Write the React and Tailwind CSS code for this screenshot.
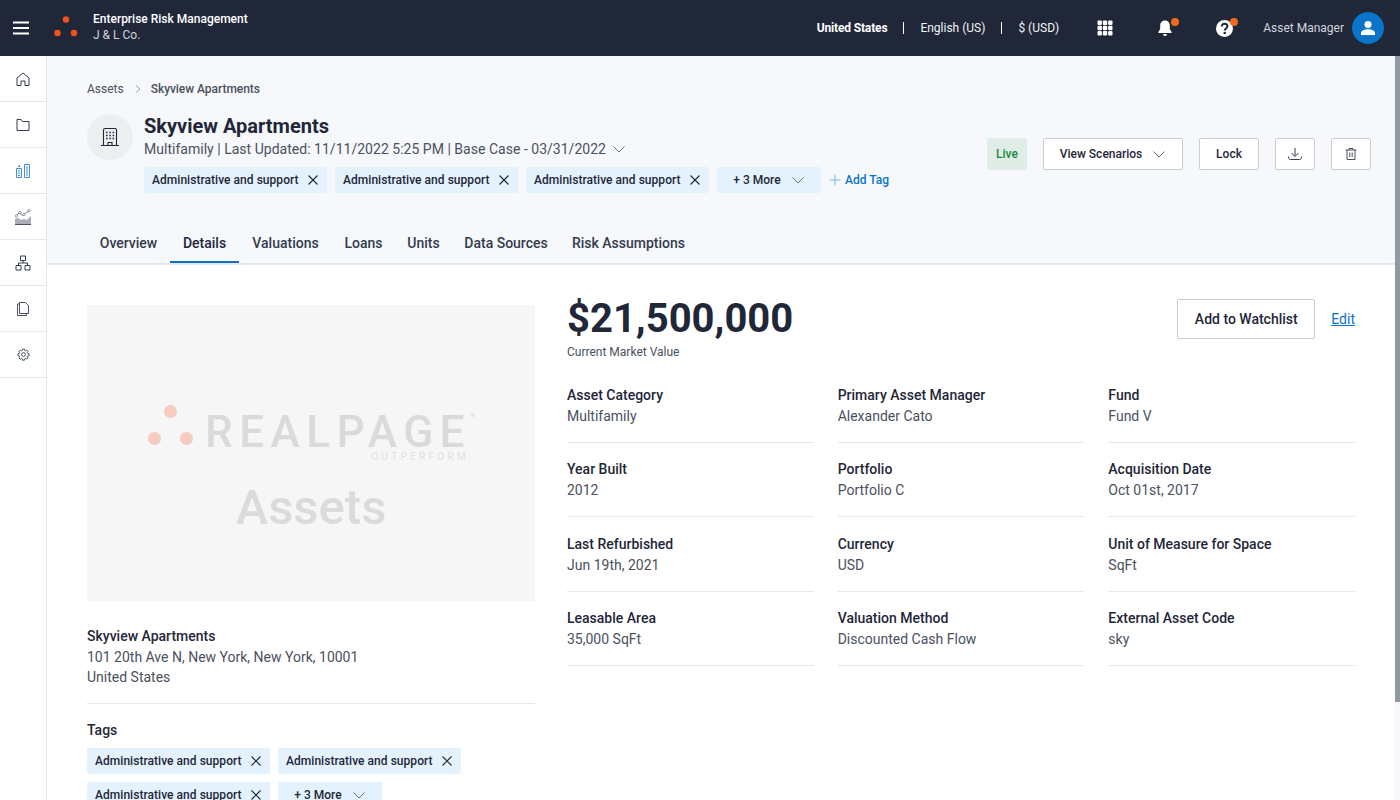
const Chevron = ({ className = 'w-3.5 h-3.5 text-gray-500' }) => (
  <svg className={className} fill="none" stroke="currentColor" viewBox="0 0 14 14" strokeWidth={1}>
    <path d="M1.5 4.5 7 10l5.5-5.5" />
  </svg>
);

const Close = () => (
  <svg className="w-3 h-3 text-[#1f2739]" fill="none" stroke="currentColor" viewBox="0 0 12 12" strokeWidth={1.1}>
    <path d="M1.5 1.5l9 9M10.5 1.5l-9 9" />
  </svg>
);

const Tag = ({ label }) => (
  <div className="flex items-center h-[26px] w-[183px] px-2 justify-between bg-[#e3f2fd] rounded-[2px] text-xs font-medium text-[#1f2739]">
    <span className="tracking-[0.04px]">{label}</span>
    <Close />
  </div>
);

const MoreTag = () => (
  <div className="flex items-center justify-center gap-[10px] h-[26px] w-[104px] bg-[#e3f2fd] rounded-[2px] text-xs font-medium text-[#1f2739]">
    <span>+ 3 More</span>
    <Chevron className="w-3.5 h-3.5 text-gray-500" />
  </div>
);

const sideIcons = [
  <svg key="home" className="w-[14px] h-[14px] text-[#333b4d]" fill="none" stroke="currentColor" viewBox="0 0 14 14" strokeWidth={1}>
    <path d="M1 6 7 1l6 5v7.500H9V9H5v4.500H1z" strokeLinejoin="round" />
  </svg>,
  <svg key="folder" className="w-[14px] h-[14px] text-[#333b4d]" fill="none" stroke="currentColor" viewBox="0 0 14 14" strokeWidth={1}>
    <path d="M1 1.500h4l1.500 2H13v9H1z" strokeLinejoin="round" />
  </svg>,
  <svg key="assets" className="w-[14px] h-[14px] text-[#3f8fdc]" fill="none" stroke="currentColor" viewBox="0 0 14 14" strokeWidth={1}>
    <path d="M.5 4.500h5v9h-5zM8.500.5h5v13h-5zM2 7h2M2 9.300h2M2 11.500h2M10 3h2M10 5h2M10 7h2M10 9h2M10 11h2M2 2.500h1.500M3.500 1v2" />
  </svg>,
  <svg key="chart" className="w-4 h-4" fill="none" viewBox="0 0 16 16">
    <path d="M0 15V10l3-1 3 2 3-1 3 1 4-4v8z" fill="#a9adb6" />
    <path d="M0 15.500h16" stroke="#4a5160" />
    <path d="M1 7l3-3 3 2.500 3-2 4-3" stroke="#6b7280" strokeWidth={0.8} />
    <circle cx="1.500" cy="7" r="1.200" fill="#fff" stroke="#6b7280" strokeWidth={0.7} />
    <circle cx="5" cy="3.500" r="1.200" fill="#fff" stroke="#6b7280" strokeWidth={0.7} />
    <circle cx="9" cy="5.500" r="1.200" fill="#fff" stroke="#6b7280" strokeWidth={0.7} />
    <circle cx="14" cy="1.800" r="1.200" fill="#fff" stroke="#6b7280" strokeWidth={0.7} />
  </svg>,
  <svg key="org" className="w-4 h-4 text-[#333b4d]" fill="none" stroke="currentColor" viewBox="0 0 16 16" strokeWidth={1}>
    <path d="M5.500 1h5v4.500h-5zM1 10.500h5V15H1zM10 10.500h5V15h-5zM8 5.500V8M3.500 10.500V8h9v2.500" />
  </svg>,
  <svg key="copy" className="w-[14px] h-[14px] text-[#4a5160]" fill="none" stroke="currentColor" viewBox="0 0 14 14" strokeWidth={1}>
    <path d="M3.500.5h6l3 3V11.500h-9zM3.500 2H1.500v11.500h9v-2" strokeLinejoin="round" />
  </svg>,
  <svg key="gear" className="w-[13px] h-[13px] text-[#4a5160]" fill="none" stroke="currentColor" viewBox="0 0 24 24" strokeWidth={1.800} strokeLinejoin="round">
    <path d="M10.300 2h3.400l.5 2.600 1.700.7 2.200-1.500 2.400 2.400-1.500 2.200.7 1.700 2.600.5v3.400l-2.600.5-.7 1.700 1.500 2.200-2.400 2.400-2.200-1.500-1.700.7-.5 2.600h-3.400l-.5-2.600-1.700-.7-2.200 1.500-2.400-2.400 1.500-2.200-.7-1.700-2.600-.5v-3.400l2.600-.5.7-1.700-1.500-2.200 2.400-2.400 2.200 1.500 1.700-.7z" />
    <circle cx="12" cy="12" r="3.500" />
  </svg>,
];

const tabs = [
  { label: 'Overview', width: 'w-[83px]' },
  { label: 'Details', width: 'w-[69px]' },
  { label: 'Valuations', width: 'w-[93px]' },
  { label: 'Loans', width: 'w-[63px]' },
  { label: 'Units', width: 'w-[57px]' },
  { label: 'Data Sources', width: 'w-[108px]' },
  { label: 'Risk Assumptions', width: 'w-[137px]' },
];

const fields = [
  ['Asset Category', 'Multifamily'],
  ['Primary Asset Manager', 'Alexander Cato'],
  ['Fund', 'Fund V'],
  ['Year Built', '2012'],
  ['Portfolio', 'Portfolio C'],
  ['Acquisition Date', 'Oct 01st, 2017'],
  ['Last Refurbished', 'Jun 19th, 2021'],
  ['Currency', 'USD'],
  ['Unit of Measure for Space', 'SqFt'],
  ['Leasable Area', '35,000 SqFt'],
  ['Valuation Method', 'Discounted Cash Flow'],
  ['External Asset Code', 'sky'],
];

export default function App() {
  return (
    <div className="h-screen flex flex-col overflow-hidden bg-white text-[#1f2739] font-['Roboto',sans-serif]">
      <header className="h-14 shrink-0 bg-[#1f2739] flex items-center text-white">
        <div className="w-[42px] flex justify-center">
          <svg className="w-4 h-[14px]" viewBox="0 0 16 14" stroke="#fff" strokeWidth={2}>
            <path d="M0 1.500h16M0 7h16M0 12.500h16" />
          </svg>
        </div>
        <svg className="w-[26px] h-6 ml-[11px] -mt-[2px]" viewBox="0 0 26 24" fill="#f4511e">
          <circle cx="13" cy="4.500" r="3.200" />
          <circle cx="4.500" cy="18" r="3.200" />
          <circle cx="21" cy="18" r="3.200" />
        </svg>
        <div className="ml-[14px] leading-4 -mt-[2px]">
          <div className="text-xs font-medium">Enterprise Risk Management</div>
          <div className="text-xs text-gray-300">J &amp; L Co.</div>
        </div>
        <div className="ml-auto flex items-center text-xs">
          <span className="font-bold tracking-[-0.15px]">United States</span>
          <span className="w-px h-3 bg-white mx-4" />
          <span className="text-gray-100">English (US)</span>
          <span className="w-px h-3 bg-white mx-4" />
          <span className="text-gray-100">$ (USD)</span>
          <svg className="w-4 h-4 ml-[38px]" viewBox="0 0 16 16" fill="#fff">
            <rect x="0.500" y="0.500" width="4.400" height="4.400" rx="1" />
            <rect x="5.800" y="0.500" width="4.400" height="4.400" rx="1" />
            <rect x="11.100" y="0.500" width="4.400" height="4.400" rx="1" />
            <rect x="0.500" y="5.800" width="4.400" height="4.400" rx="1" />
            <rect x="5.800" y="5.800" width="4.400" height="4.400" rx="1" />
            <rect x="11.100" y="5.800" width="4.400" height="4.400" rx="1" />
            <rect x="0.500" y="11.100" width="4.400" height="4.400" rx="1" />
            <rect x="5.800" y="11.100" width="4.400" height="4.400" rx="1" />
            <rect x="11.100" y="11.100" width="4.400" height="4.400" rx="1" />
          </svg>
          <div className="relative ml-[44px] w-4 h-[18px]">
            <svg className="w-4 h-[18px]" viewBox="0 0 16 18" fill="#fff">
              <path d="M8 1.500c-3 0-4.800 2.200-4.800 5v3.600L1.400 13v1h13.200v-1l-1.800-2.900V6.500c0-2.800-1.800-5-4.800-5z" />
              <path d="M6 15h4a2 2 0 0 1-4 0z" />
            </svg>
            <span className="absolute -top-[1px] left-[14px] w-2 h-2 rounded-full bg-[#f26a1b]" />
          </div>
          <div className="relative ml-[43px] w-[17px] h-[17px]">
            <svg className="w-[17px] h-[17px]" viewBox="0 0 17 17">
              <circle cx="8.500" cy="8.500" r="8.500" fill="#fff" />
              <path d="M5.800 6.500c0-1.700 1.200-2.700 2.800-2.700s2.800 1 2.800 2.500c0 2.200-2.600 2.100-2.600 4.200" fill="none" stroke="#1f2739" strokeWidth={2} />
              <circle cx="8.700" cy="13" r="1.300" fill="#1f2739" />
            </svg>
            <span className="absolute -top-[2px] left-[14px] w-2 h-2 rounded-full bg-[#f26a1b]" />
          </div>
          <span className="ml-[30px] text-gray-300">Asset Manager</span>
          <div className="ml-[8px] mr-4 w-8 h-8 rounded-full bg-[#0a74c9] flex items-center justify-center">
            <svg className="w-4 h-4" viewBox="0 0 16 16" fill="#fff">
              <circle cx="8" cy="4.500" r="3.500" />
              <path d="M1 15v-2c0-2.500 3.500-3.800 7-3.800s7 1.300 7 3.800v2z" />
            </svg>
          </div>
        </div>
      </header>

      <div className="flex-1 flex min-h-0">
        <aside className="w-[47px] shrink-0 border-r border-gray-200 bg-white">
          {sideIcons.map((icon) => (
            <div key={icon.key} className="h-[46px] flex items-center justify-center border-b border-gray-200">
              {icon}
            </div>
          ))}
        </aside>

        <main className="flex-1 min-w-0 overflow-hidden">
          <section className="h-[209px] bg-[#f6f8fb] border-b-2 border-gray-200 flex flex-col">
            <div className="pl-10 pr-6 pt-[25px] flex-1">
              <div className="flex items-center text-xs text-[#4a5160] h-4">
                <span>Assets</span>
                <svg className="w-2 h-2 mx-[10px] text-gray-400" fill="none" stroke="currentColor" viewBox="0 0 8 8">
                  <path d="M2 0.500 6 4 2 7.500" />
                </svg>
                <span className="font-medium tracking-[-0.05px] -ml-[1px]">Skyview Apartments</span>
              </div>
              <div className="flex mt-[17px]">
                <div className="w-[46px] h-[46px] rounded-full bg-[#eceef0] flex items-center justify-center shrink-0">
                  <svg className="w-5 h-5 text-[#1f2739]" fill="none" stroke="currentColor" viewBox="0 0 20 20" strokeWidth={1.100}>
                    <path d="M1 18.500h18M3.500 18.500V3c0-.8.5-1.500 1.500-1.500h10c1 0 1.500.7 1.500 1.500v15.500M8 18.500v-3h4v3" />
                    <path d="M6 5.500h1.500M9.300 5.500h1.500M12.600 5.500h1.500M6 8.500h1.500M9.300 8.500h1.500M12.600 8.500h1.500M6 11.500h1.500M9.300 11.500h1.500M12.600 11.500h1.500" strokeWidth={1.500} />
                  </svg>
                </div>
                <div className="ml-[11px]">
                  <div className="text-xl font-bold leading-6 text-[#1f2739]">Skyview Apartments</div>
                  <div className="flex items-center text-sm leading-5 text-[#4a5160] mt-[1px]">
                    <span className="tracking-[0.02px]">Multifamily | Last Updated: 11/11/2022 5:25 PM | Base Case - 03/31/2022</span>
                    <Chevron className="w-3.5 h-3.5 ml-[6px] text-gray-500" />
                  </div>
                  <div className="flex items-center gap-2 mt-2">
                    <Tag label="Administrative and support" />
                    <Tag label="Administrative and support" />
                    <Tag label="Administrative and support" />
                    <MoreTag />
                    <div className="flex items-center text-xs font-medium text-[#0a74c9]">
                      <svg className="w-3 h-3 mr-1 text-[#7db8e8]" fill="none" stroke="currentColor" viewBox="0 0 12 12">
                        <path d="M6 0.500v11M0.500 6h11" />
                      </svg>
                      Add Tag
                    </div>
                  </div>
                </div>
                <div className="ml-auto flex items-center gap-4 h-8 mt-[24px] text-xs font-medium">
                  <div className="w-10 h-8 bg-[#e0ede6] rounded-[2px] text-[#1a8a3f] flex items-center justify-center">Live</div>
                  <button className="w-[140px] h-8 bg-white border border-[#c9ccd2] rounded-[2px] flex items-center justify-center gap-[10px]">
                    View Scenarios
                    <Chevron className="w-3.5 h-3.5 text-gray-500" />
                  </button>
                  <button className="w-[60px] h-8 bg-white border border-[#c9ccd2] rounded-[2px]">Lock</button>
                  <button className="w-10 h-8 bg-white border border-[#c9ccd2] rounded-[2px] flex items-center justify-center">
                    <svg className="w-4 h-4 text-[#333b4d]" fill="none" stroke="currentColor" viewBox="0 0 16 16">
                      <path d="M8 2v8M4.500 7 8 10.500 11.500 7M1.500 10.500c0 2 .5 3 2 3h9c1.500 0 2-1 2-3" />
                    </svg>
                  </button>
                  <button className="w-10 h-8 bg-white border border-[#c9ccd2] rounded-[2px] flex items-center justify-center">
                    <svg className="w-[14px] h-[14px] text-[#4a5160]" fill="none" stroke="currentColor" viewBox="0 0 14 14">
                      <path d="M1.500 3h11M5 3V1.500h4V3M3 3v9.500h8V3M5.800 5.500v4.500M8.200 5.500v4.500" />
                    </svg>
                  </button>
                </div>
              </div>
            </div>
            <nav className="pl-10 flex text-sm font-medium h-[38px] text-[#333b4d]">
              {tabs.map((tab) => (
                <div
                  key={tab.label}
                  className={`${tab.width} flex items-center justify-center h-[38px] border-b-2 ${tab.label === 'Details' ? 'border-[#0a74c9] text-[#1f2739]' : 'border-transparent'}`}
                >
                  {tab.label}
                </div>
              ))}
            </nav>
          </section>

          <section className="flex pl-10 pr-10 pt-10">
            <div className="w-[448px] shrink-0">
              <div className="h-[297px] bg-[#f6f6f6] flex flex-col items-center pt-[100px]">
                <div className="flex self-start ml-[61px]">
                  <svg className="w-[45px] h-10 opacity-25" viewBox="0 0 45 40" fill="#f4511e">
                    <circle cx="22.500" cy="6.500" r="6.500" />
                    <circle cx="6.500" cy="33.500" r="6.500" />
                    <circle cx="38.500" cy="33.500" r="6.500" />
                  </svg>
                  <div className="ml-[12px] mt-[7px] flex flex-col relative">
                    <span className="text-[44px] leading-[40px] font-medium tracking-[6.500px] text-[#d9dadc]">REALPAGE</span>
                    <span className="self-end text-[10px] leading-[12px] tracking-[3.300px] text-[#e0e1e2] mr-[2px] -mt-[1px]">OUTPERFORM</span>
                    <span className="absolute -right-[4px] top-[1px] text-[6px] leading-[6px] text-[#d9dadc]">®</span>
                  </div>
                </div>
                <div className="text-[49px] leading-[48px] mt-[21px] font-medium text-[#dadbdc]">Assets</div>
              </div>
              <div className="mt-6 text-sm font-medium leading-5">Skyview Apartments</div>
              <div className="text-sm leading-5 text-[#4a5160] mt-[1px]">101 20th Ave N, New York, New York, 10001</div>
              <div className="text-sm leading-5 text-[#4a5160]">United States</div>
              <div className="border-t border-gray-200 mt-4 pt-4">
                <div className="text-sm font-medium leading-5">Tags</div>
                <div className="flex flex-wrap gap-2 mt-2 w-[400px]">
                  <Tag label="Administrative and support" />
                  <Tag label="Administrative and support" />
                  <Tag label="Administrative and support" />
                  <MoreTag />
                </div>
              </div>
            </div>

            <div className="flex-1 ml-8">
              <div className="flex items-start justify-between h-[80px]">
                <div>
                  <div className="text-[40px] leading-[28px] font-bold text-[#1f2739]">$21,500,000</div>
                  <div className="text-xs leading-4 text-[#4a5160] mt-[11px]">Current Market Value</div>
                </div>
                <div className="flex items-center gap-4 -mt-[6px]">
                  <button className="w-[138px] h-10 bg-white border border-[#c9ccd2] rounded-[2px] text-sm font-medium">Add to Watchlist</button>
                  <a className="text-sm text-[#0a74c9] underline">Edit</a>
                </div>
              </div>
              <div className="grid grid-cols-3 gap-x-6 gap-y-[16.33px]">
                {fields.map(([label, value]) => (
                  <div key={label} className="h-[58px] border-b border-gray-200">
                    <div className="text-sm font-medium leading-5">{label}</div>
                    <div className="text-sm leading-5 text-[#4a5160] mt-[1px]">{value}</div>
                  </div>
                ))}
              </div>
            </div>
          </section>
        </main>

        <div className="w-[5px] shrink-0 bg-[#f6f8fb]">
          <div className="h-[646px] bg-[#8f9ba3]" />
        </div>
      </div>
    </div>
  );
}
